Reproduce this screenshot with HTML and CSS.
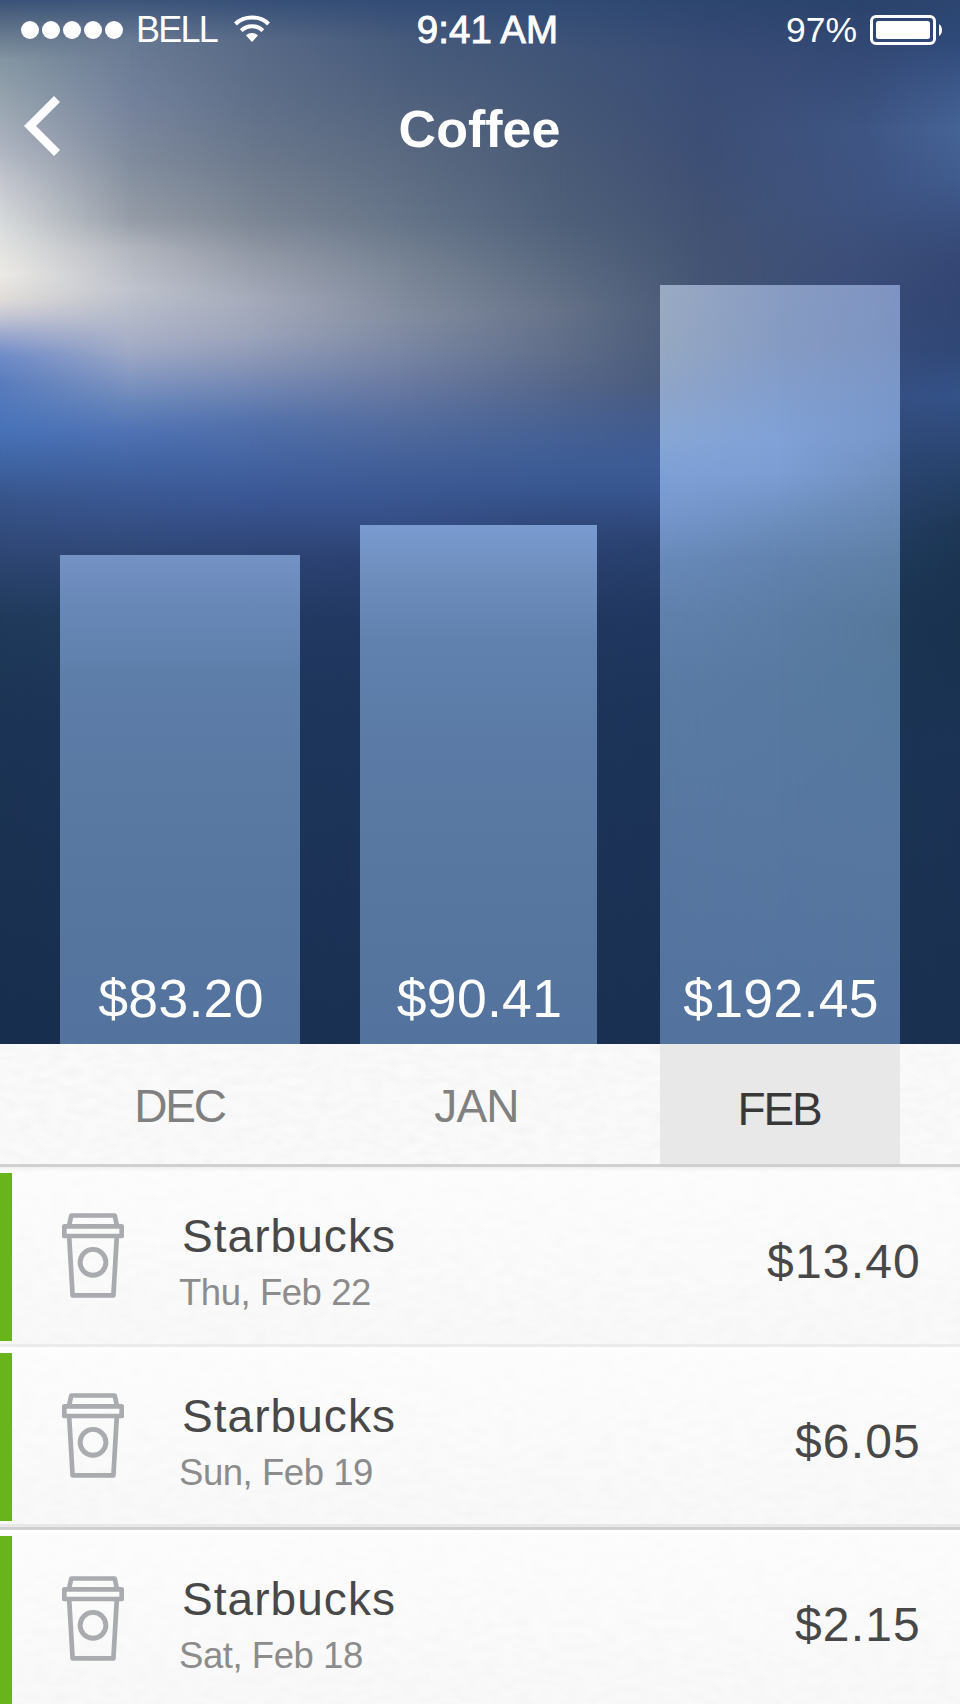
FILE: index.html
```html
<!DOCTYPE html>
<html lang="en">
<head>
<meta charset="utf-8">
<title>Coffee</title>
<link rel="stylesheet" href="styles.css">
</head>
<body>
<svg class="defs" aria-hidden="true">
  <defs>
    <filter id="paper" x="0" y="0" width="100%" height="100%">
      <feTurbulence type="fractalNoise" baseFrequency="0.06 0.12" numOctaves="3" seed="4"/>
      <feColorMatrix values="0 0 0 0 0.5  0 0 0 0 0.5  0 0 0 0 0.5  0.16 0 0 0 -0.055"/>
    </filter>
    <symbol id="cup" viewBox="0 0 62 85">
      <g fill="none" stroke="#a9abaf" stroke-width="4.7" stroke-linejoin="round">
        <path d="M7 13 9.3 2.5H52.7L55 13"/>
        <rect x="2.3" y="13.4" width="57.4" height="9.6"/>
        <path d="M7.2 24 10.6 82.4H51.4L54.8 24"/>
        <circle cx="31" cy="49.3" r="12.9" stroke-width="4.9"/>
      </g>
    </symbol>
  </defs>
</svg>
<main class="screen">
  <section class="hero">
    <div class="sky">
      <i class="band b0"></i><i class="band b1"></i><i class="band b2"></i><i class="band b3"></i>
      <i class="band b4"></i><i class="band b5"></i><i class="band b6"></i><i class="band b7"></i>
    </div>
    <header class="status">
      <div class="carrier">
        <span class="dots"><i></i><i></i><i></i><i></i><i></i></span>
        <span class="bell">BELL</span>
        <svg class="wifi" viewBox="0 0 36 27"><path d="M1.5 9C10 .3 26 .3 34.500 9M7.200 15.700C13 9.700 23 9.700 28.800 15.700" fill="none" stroke="#fff" stroke-width="4"/><path d="M12 20.500C15 17.300 21 17.300 24 20.500L18 27Z" fill="#fff"/></svg>
      </div>
      <span class="time">9:41 AM</span>
      <div class="power">
        <span class="pct">97%</span>
        <svg class="battery" viewBox="0 0 72 30"><rect x="1.500" y="1.500" width="63" height="27" rx="4.500" fill="none" stroke="#fff" stroke-width="3"/><rect x="6" y="6" width="54" height="18" rx="2.500" fill="#fff"/><path d="M69 9Q72 11 72 15T69 21Z" fill="#fff"/></svg>
      </div>
    </header>
    <nav class="nav">
      <svg class="back" viewBox="0 0 36 60"><path d="M30 0 36 6 12 30 36 54 30 60 0 30Z" fill="#fff"/></svg>
      <h1>Coffee</h1>
    </nav>
    <div class="chart">
      <div class="bar dec"><span>$83.20</span></div>
      <div class="bar jan"><span>$90.41</span></div>
      <div class="bar feb"><span>$192.45</span></div>
    </div>
  </section>
  <section class="sheet">
    <svg class="grain" width="960" height="660"><rect width="960" height="660" filter="url(#paper)"/></svg>
    <div class="months">
      <span class="month">DEC</span><span class="month m-jan">JAN</span><span class="month active">FEB</span>
    </div>
    <ul class="list">
      <li class="row first"><div class="item"><svg class="cup"><use href="#cup"/></svg><div class="info"><b>Starbucks</b><small>Thu, Feb 22</small></div><span class="amount">$13.40</span></div></li>
      <li class="row second"><div class="item"><svg class="cup"><use href="#cup"/></svg><div class="info"><b>Starbucks</b><small>Sun, Feb 19</small></div><span class="amount">$6.05</span></div></li>
      <li class="row third"><div class="item"><svg class="cup"><use href="#cup"/></svg><div class="info"><b>Starbucks</b><small>Sat, Feb 18</small></div><span class="amount">$2.15</span></div></li>
    </ul>
  </section>
</main>
</body>
</html>
```
FILE: styles.css
```css
* { box-sizing: border-box; margin: 0; padding: 0; }
body { font-family: "Liberation Sans", Arial, sans-serif; background: #fafafa; }
.defs { position: absolute; width: 0; height: 0; }
.screen { width: 960px; height: 1704px; overflow: hidden; }

.hero { position: relative; height: 1044px; display: flex; flex-direction: column; color: #fff; }

/* Blurred backdrop: vertical colour bands cross-faded from left to right. */
.sky { position: absolute; inset: 0; }
.band { position: absolute; inset: 0; -webkit-mask-image: linear-gradient(to right, transparent var(--from), #000 var(--to)); mask-image: linear-gradient(to right, transparent var(--from), #000 var(--to)); }
.b0 { --from: -2px; --to: -1px; background: linear-gradient(rgb(58,82,122) 0, rgb(85,105,130) 20px, rgb(132,150,163) 60px, rgb(150,164,174) 100px, rgb(170,177,190) 140px, rgb(198,201,208) 185px, rgb(217,220,221) 225px, rgb(237,235,230) 275px, rgb(224,220,217) 300px, rgb(196,198,212) 317px, rgb(155,168,206) 335px, rgb(112,140,200) 355px, rgb(90,125,190) 382px, rgb(72,115,185) 430px, rgb(62,98,160) 468px, rgb(55,84,138) 500px, rgb(46,70,116) 555px, rgb(31,58,90) 620px, rgb(28,52,85) 720px, rgb(24,46,78) 1044px); }
.b1 { --from: 0px; --to: 130px; background: linear-gradient(rgb(60,85,122) 0, rgb(104,121,146) 40px, rgb(116,130,156) 100px, rgb(128,140,157) 160px, rgb(150,157,168) 220px, rgb(179,183,191) 250px, rgb(191,195,205) 290px, rgb(177,183,201) 323px, rgb(161,171,198) 350px, rgb(131,151,193) 378px, rgb(104,134,186) 403px, rgb(80,114,180) 432px, rgb(68,102,165) 460px, rgb(60,90,150) 490px, rgb(55,81,136) 520px, rgb(47,71,117) 557px, rgb(36,60,98) 610px, rgb(28,53,88) 700px, rgb(25,46,80) 1044px); }
.b2 { --from: 130px; --to: 250px; background: linear-gradient(rgb(55,80,120) 0, rgb(88,106,135) 40px, rgb(96,112,138) 100px, rgb(108,121,141) 160px, rgb(125,135,149) 220px, rgb(150,156,169) 260px, rgb(166,171,187) 300px, rgb(157,165,187) 335px, rgb(135,148,182) 365px, rgb(111,133,179) 391px, rgb(84,114,172) 421px, rgb(68,100,162) 460px, rgb(58,86,148) 500px, rgb(51,76,130) 530px, rgb(45,67,115) 562px, rgb(35,57,98) 620px, rgb(30,54,92) 690px, rgb(26,48,82) 1044px); }
.b3 { --from: 250px; --to: 400px; background: linear-gradient(rgb(50,76,118) 0, rgb(70,90,123) 40px, rgb(80,98,126) 100px, rgb(92,107,130) 160px, rgb(102,117,137) 220px, rgb(122,134,150) 270px, rgb(132,142,161) 315px, rgb(122,135,164) 350px, rgb(103,120,161) 390px, rgb(83,108,158) 425px, rgb(69,97,153) 460px, rgb(60,88,147) 490px, rgb(54,80,136) 520px, rgb(42,64,112) 560px, rgb(33,57,98) 620px, rgb(30,54,92) 700px, rgb(26,48,82) 1044px); }
.b4 { --from: 400px; --to: 560px; background: linear-gradient(rgb(48,75,117) 0, rgb(64,84,120) 50px, rgb(68,87,119) 100px, rgb(74,91,119) 160px, rgb(79,96,122) 220px, rgb(88,104,127) 260px, rgb(101,114,136) 310px, rgb(96,110,138) 350px, rgb(84,102,139) 390px, rgb(73,98,146) 422px, rgb(64,94,150) 455px, rgb(56,86,144) 490px, rgb(51,77,130) 512px, rgb(42,65,112) 555px, rgb(32,56,96) 620px, rgb(29,53,90) 720px, rgb(26,48,82) 1044px); }
.b5 { --from: 560px; --to: 700px; background: linear-gradient(rgb(45,70,112) 0, rgb(58,77,118) 60px, rgb(62,79,117) 160px, rgb(66,83,115) 230px, rgb(69,86,117) 300px, rgb(68,86,118) 380px, rgb(64,88,136) 415px, rgb(60,90,148) 465px, rgb(53,82,140) 500px, rgb(42,66,112) 540px, rgb(33,57,98) 600px, rgb(28,52,88) 700px, rgb(26,48,82) 1044px); }
.b6 { --from: 700px; --to: 860px; background: linear-gradient(rgb(42,67,108) 0, rgb(53,74,118) 60px, rgb(62,85,131) 130px, rgb(62,83,129) 200px, rgb(60,78,121) 260px, rgb(56,75,120) 310px, rgb(54,78,128) 400px, rgb(42,68,112) 480px, rgb(28,54,84) 600px, rgb(26,48,82) 1044px); }
.b7 { --from: 860px; --to: 960px; background: linear-gradient(rgb(44,70,112) 0, rgb(46,73,120) 40px, rgb(58,86,136) 80px, rgb(70,99,150) 130px, rgb(64,91,142) 180px, rgb(57,79,126) 225px, rgb(53,71,116) 265px, rgb(50,70,115) 310px, rgb(48,72,118) 350px, rgb(52,82,137) 395px, rgb(47,74,122) 432px, rgb(38,65,104) 480px, rgb(31,56,88) 525px, rgb(26,52,81) 570px, rgb(25,50,78) 640px, rgb(27,51,85) 740px, rgb(26,48,80) 1044px); }

.status { position: relative; height: 60px; display: grid; grid-template-columns: 1fr auto 1fr; align-items: center; padding: 0 18px 0 21px; line-height: 60px; }
.carrier, .power { display: flex; align-items: center; }
.power { justify-content: flex-end; gap: 13px; }
.dots { display: flex; gap: 3px; }
.dots i { width: 18px; height: 18px; border-radius: 50%; background: #fff; }
.bell { font-size: 36px; letter-spacing: -1.8px; margin-left: 13px; }
.wifi { width: 36px; height: 27px; margin: -3px 0 0 17px; }
.time { font-size: 38.5px; -webkit-text-stroke: .9px #fff; margin-left: 12px; }
.pct { font-size: 35.5px; }
.battery { width: 72px; height: 30px; }
.nav { position: relative; height: 120px; padding: 36px 24px 0; display: flex; align-items: flex-start; }
.back { width: 36px; height: 60px; }
.nav h1 { flex: 1; margin-right: 37px; padding-top: 3px; text-align: center; font-size: 52px; line-height: 60px; }

.chart { position: relative; flex: 1; display: grid; grid-template-columns: 240px 237px 240px; column-gap: 60px; padding-left: 60px; align-items: end; }
.chart .feb { margin-left: 3px; width: 240px; }
.bar { position: relative; display: flex; align-items: flex-end; justify-content: center; padding: 0 0 15px 2px; font-size: 53.5px; line-height: 60px; letter-spacing: .3px; }
.bar span { position: relative; z-index: 1; }
.dec { height: 489px; background: linear-gradient(rgb(116,146,196) 0, rgb(104,136,184) 50px, rgb(94,126,170) 120px, rgb(90,122,164) 220px, rgb(86,118,160) 350px, rgb(83,115,158) 489px); }
.jan { height: 519px; background: linear-gradient(rgb(122,155,208) 0, rgb(110,142,190) 50px, rgb(96,129,174) 120px, rgb(91,123,166) 220px, rgb(87,119,160) 360px, rgb(83,115,158) 519px); }
.feb { height: 759px; background: linear-gradient(rgb(154,170,196) 0, rgb(150,168,194) 60px, rgb(143,165,201) 105px, rgb(136,167,213) 150px, rgb(126,160,215) 190px, rgb(117,151,205) 230px, rgb(104,138,186) 275px, rgb(96,129,172) 330px, rgb(90,123,165) 400px, rgb(87,119,161) 560px, rgb(83,115,158) 759px); }
.feb::before, .feb::after { content: ""; position: absolute; inset: 0; }
.feb::before { background: linear-gradient(rgb(136,156,194) 0, rgb(134,155,195) 60px, rgb(130,158,205) 105px, rgb(128,161,215) 155px, rgb(123,157,211) 190px, rgb(110,144,192) 230px, rgb(98,131,175) 275px, rgb(92,125,166) 330px, rgb(88,122,161) 400px, rgb(87,119,161) 560px, rgb(83,115,158) 759px); -webkit-mask-image: linear-gradient(to right, transparent, #000 50%); mask-image: linear-gradient(to right, transparent, #000 50%); }
.feb::after { background: linear-gradient(rgb(126,147,194) 0, rgb(124,148,194) 60px, rgb(122,151,201) 105px, rgb(119,150,201) 150px, rgb(112,144,190) 190px, rgb(103,136,178) 230px, rgb(94,128,166) 275px, rgb(86,120,154) 340px, rgb(85,121,157) 400px, rgb(87,119,160) 560px, rgb(83,115,158) 759px); -webkit-mask-image: linear-gradient(to right, transparent 50%, #000); mask-image: linear-gradient(to right, transparent 50%, #000); }

.sheet { position: relative; height: 660px; background: #fafafa; }
.grain { position: absolute; inset: 0; }
.months { position: relative; height: 120px; display: grid; grid-template-columns: 240px 237px 240px; column-gap: 60px; padding-left: 60px; line-height: 120px; font-size: 46px; letter-spacing: -2.2px; text-align: center; color: #808080; }
.month { padding: 2px 1px 0 0; height: 120px; }
.month.m-jan { letter-spacing: -.8px; padding-right: 4px; }
.month.active { margin-left: 3px; width: 240px; padding: 5px 2px 0 0; background: #e8e8e8; color: #383838; }
.list { position: relative; list-style: none; }
.row { background: linear-gradient(rgba(255,255,255,.6), rgba(245,245,245,.25)); }
.first { border-top: 3px solid #d0d0d0; padding: 6px 0 3px; border-bottom: 3px solid #ebebeb; box-shadow: inset 0 4px 4px -2px rgba(0,0,0,.06); }
.second { border-top: 3px solid #fff; padding: 3px 0; border-bottom: 3px solid #e8e8e8; }
.third { border-top: 3px solid #d0d0d0; box-shadow: inset 0 3px #fff; padding-top: 6px; }
.item { height: 168px; border-left: 12px solid #6ab41b; padding: 0 39px 0 50px; display: flex; align-items: flex-start; }
.cup { width: 62px; height: 85px; margin-top: 40px; }
.info { margin: 35px 0 0 55px; display: flex; flex-direction: column; flex: 1; color: #484848; }
.info b { font-weight: 400; font-size: 46px; line-height: 56px; letter-spacing: 1.05px; padding-left: 3px; }
.info small { font-size: 36.5px; line-height: 56px; letter-spacing: -.45px; color: #8c8c8c; padding-top: 1px; }
.amount { font-size: 48px; line-height: 56px; letter-spacing: 1.2px; margin-top: 61px; color: #484848; }
```
